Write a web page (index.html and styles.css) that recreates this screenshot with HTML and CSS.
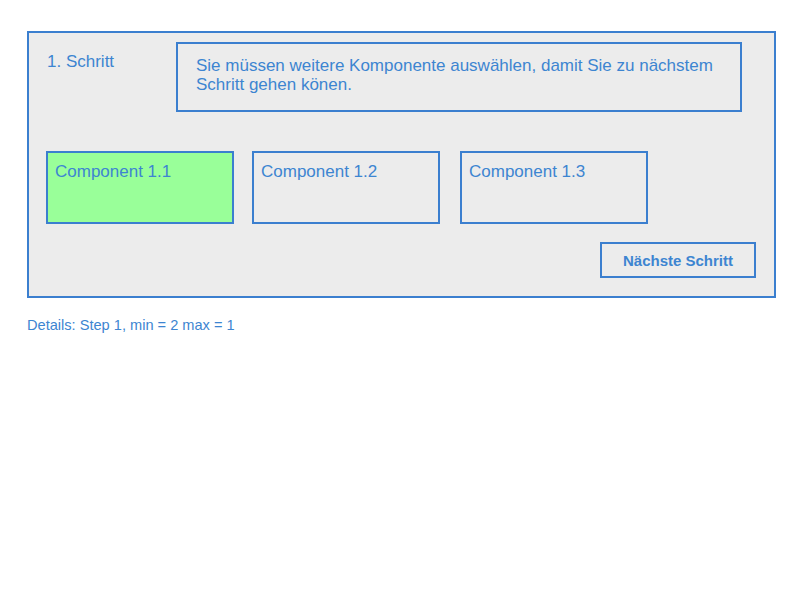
FILE: index.html
```html
<!DOCTYPE html>
<html>
<head>
<meta charset="utf-8">
<link rel="stylesheet" href="styles.css">
</head>
<body>
<div class="panel">
  <div class="top-row">
    <div class="step-label">1. Schritt</div>
    <div class="message">Sie müssen weitere Komponente auswählen, damit Sie zu nächstem Schritt gehen könen.</div>
  </div>
  <div class="components">
    <div class="component selected">Component 1.1</div>
    <div class="component">Component 1.2</div>
    <div class="component">Component 1.3</div>
  </div>
  <div class="actions">
    <button class="next-btn">Nächste Schritt</button>
  </div>
</div>
<div class="details">Details: Step 1, min = 2 max = 1</div>
</body>
</html>
```

FILE: styles.css
```css
html, body {
  margin: 0;
  padding: 0;
  background: #ffffff;
}
body {
  padding: 31px 0 0 27px;
  font-family: "Liberation Sans", Arial, sans-serif;
  color: #3d85d1;
}
.panel {
  box-sizing: border-box;
  width: 749px;
  height: 267px;
  border: 2px solid #3b7fcf;
  background: #ececec;
  padding: 9px 18px 18px 17px;
  display: flex;
  flex-direction: column;
}
.top-row {
  display: flex;
  align-items: flex-start;
}
.step-label {
  box-sizing: border-box;
  width: 130px;
  flex: none;
  margin-top: 10px;
  padding-left: 1px;
  font-size: 17px;
  line-height: 19px;
}
.message {
  box-sizing: border-box;
  width: 566px;
  height: 70px;
  border: 2px solid #3b7fcf;
  padding: 12px 18px 0 18px;
  font-size: 17px;
  line-height: 19px;
}
.components {
  display: flex;
  gap: 18px;
  margin-top: 39px;
}
.component {
  box-sizing: border-box;
  width: 188px;
  height: 73px;
  border: 2px solid #3b7fcf;
  padding: 9px 7px;
  font-size: 17px;
  line-height: 19px;
}
.component:last-child {
  margin-left: 2px;
}
.component.selected {
  background: #99ff99;
}
.actions {
  display: flex;
  justify-content: flex-end;
  margin-top: 18px;
}
.next-btn {
  box-sizing: border-box;
  width: 156px;
  height: 36px;
  border: 2px solid #3b7fcf;
  background: #ececec;
  color: #3d85d1;
  font-family: "Liberation Sans", Arial, sans-serif;
  font-weight: bold;
  font-size: 15px;
  padding: 0;
}
.details {
  margin-top: 19px;
  font-size: 14.6px;
  line-height: 17px;
}
```
